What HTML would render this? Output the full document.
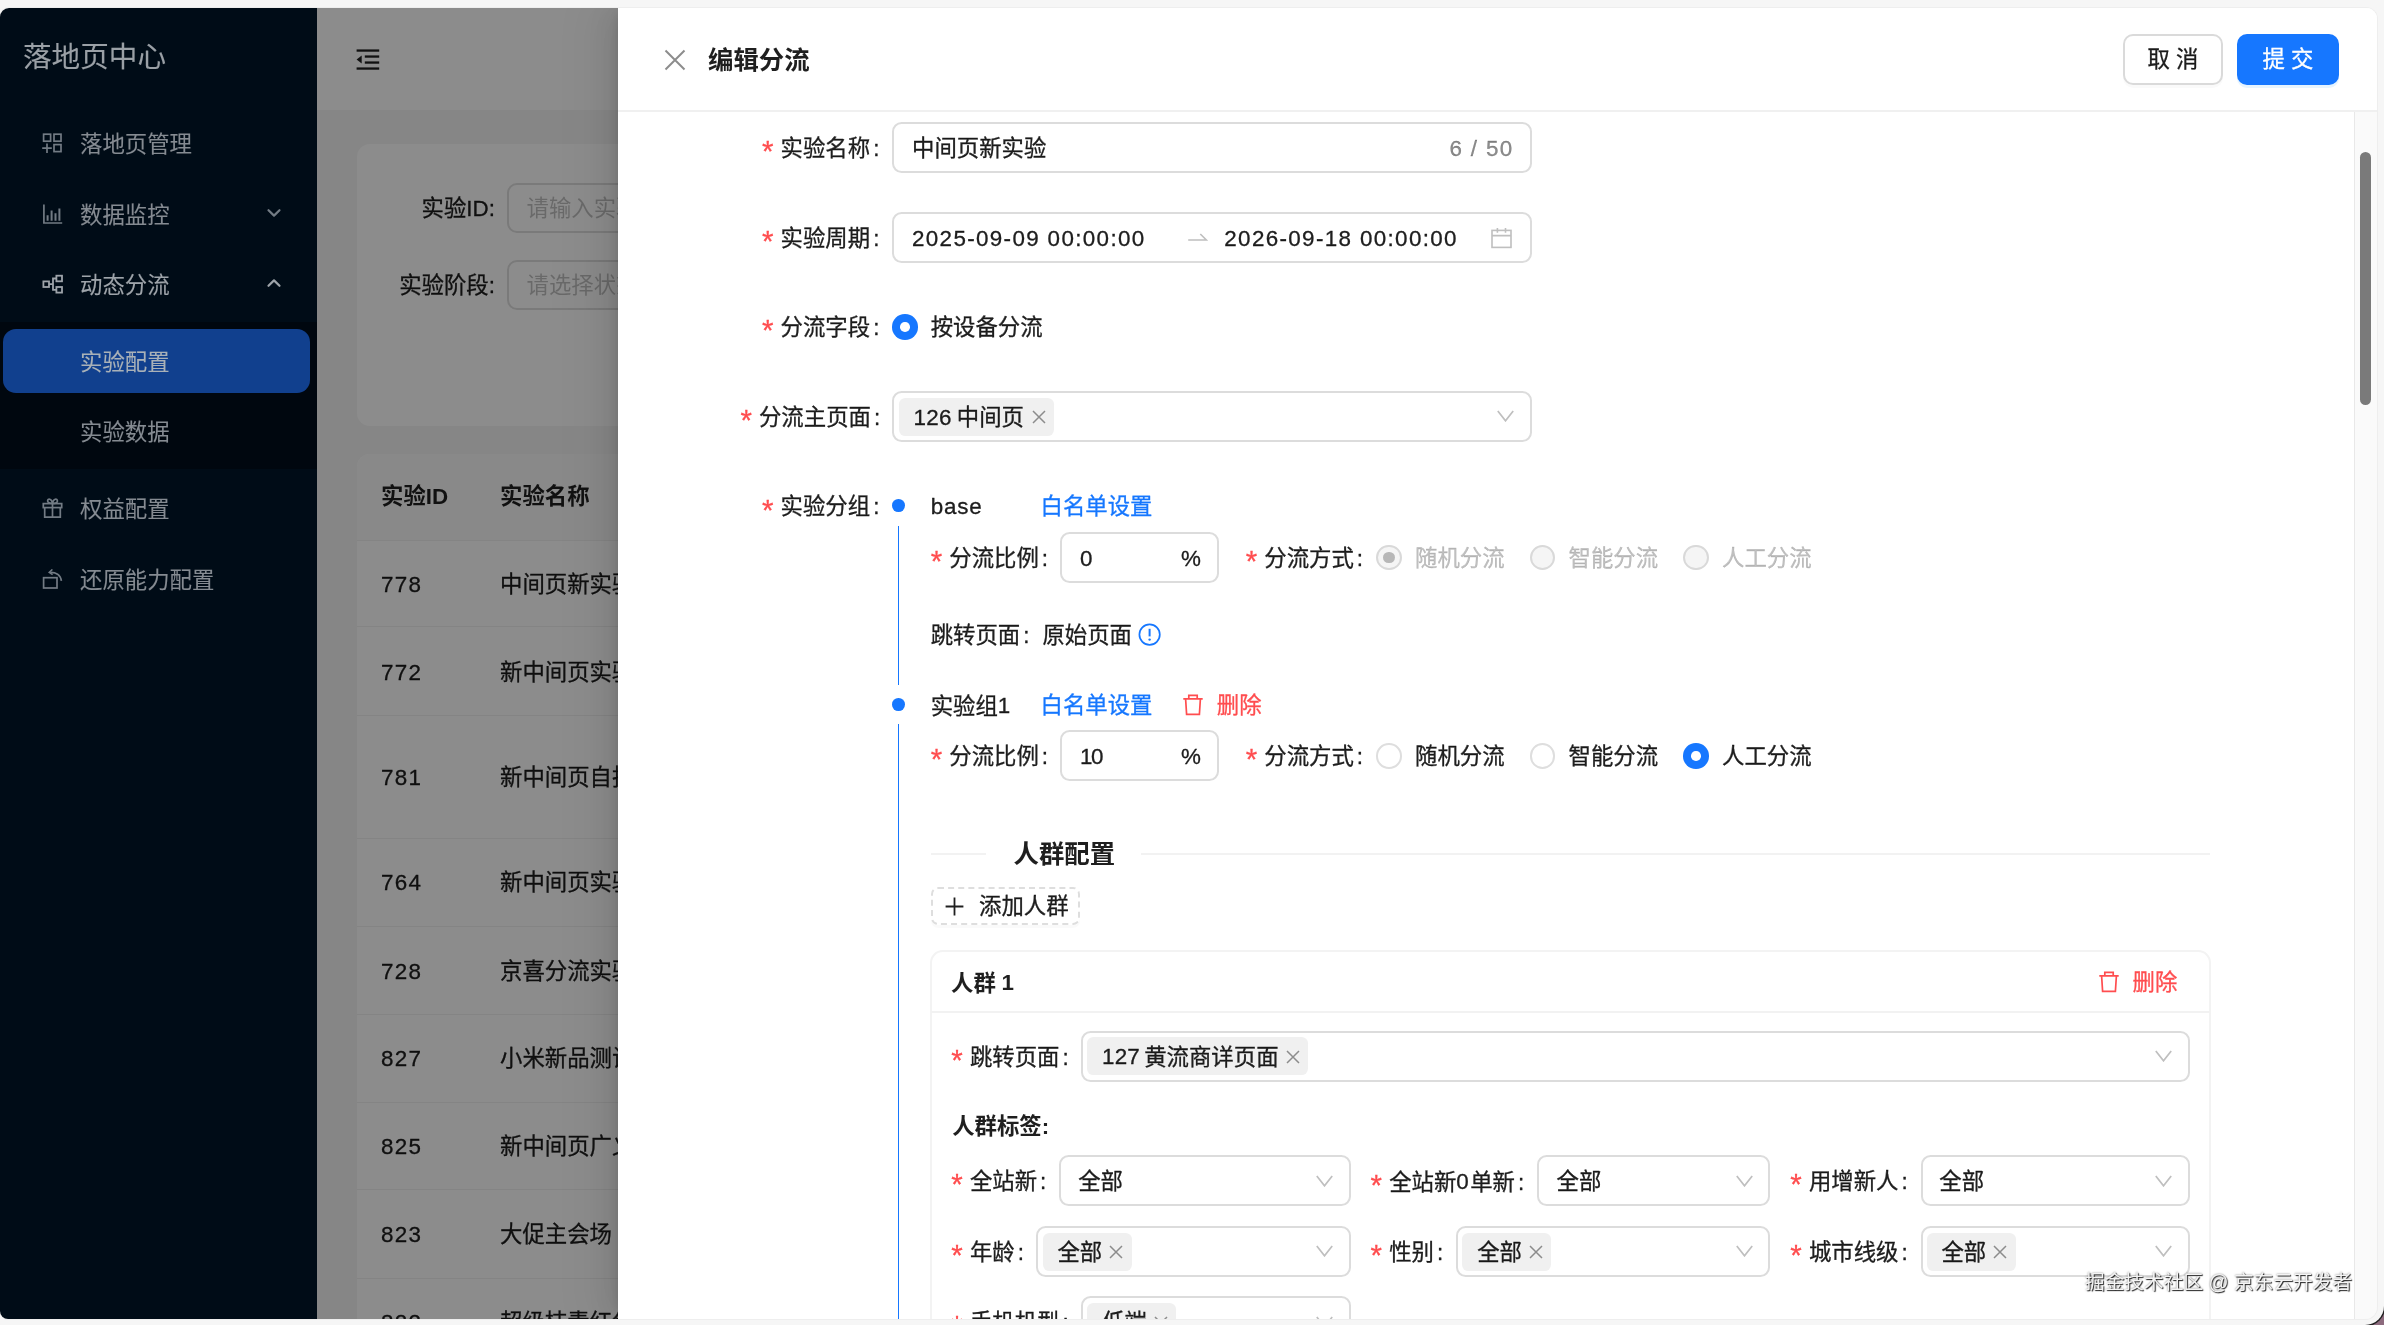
<!DOCTYPE html>
<html lang="zh-CN">
<head>
<meta charset="utf-8">
<title>落地页中心 - 编辑分流</title>
<style>
*{box-sizing:border-box;margin:0;padding:0}
html,body{width:2384px;height:1325px;overflow:hidden;background:#8d6b7e}
.bgp{position:absolute;left:0;top:0;width:2384px;height:1325px;background:#f6f6f6;border-bottom-right-radius:19px;box-shadow:0 0 0 1.500px #222}
body{font-family:"Liberation Sans","Noto Sans CJK SC",sans-serif;font-size:22.4px;color:rgba(0,0,0,.88);position:relative;-webkit-text-stroke:.3px}
.abs{position:absolute}
.win{will-change:transform;position:absolute;left:0;top:8px;width:2377px;height:1311px;border-radius:9px 11px 12px 8px;box-shadow:0 0 0 1px #eee;overflow:hidden;background:#f5f5f5}
/* ---------- sidebar ---------- */
.side{-webkit-text-stroke:.1px;position:absolute;left:0;top:0;width:317px;height:1311px;background:#000c17;color:#858b92}
.logo{position:absolute;left:23px;top:29px;font-size:28.6px;line-height:40px;color:#9aa0a6;white-space:nowrap}
.mi{position:absolute;left:6px;width:304px;height:64px;border-radius:13px;line-height:68px;white-space:nowrap}
.mi .t{position:absolute;left:74px;top:0}
.mi svg{position:absolute}
.mi.sel{background:#11408e;color:#a9b1b8}
.mi.open{color:#9ea4aa}
.mi svg{color:#727b84}
.mi.open svg{color:#9ea4aa}
.sub{position:absolute;left:0;top:314px;width:317px;height:147px;background:#00070f}
/* ---------- main ---------- */
.main{position:absolute;left:317px;top:0;width:2060px;height:1311px;background:#f5f5f5}
.hdr{position:absolute;left:0;top:0;width:2060px;height:102px;background:#fff}
.card{position:absolute;background:#fff;border-radius:13px}
.flab{position:absolute;left:0;width:138px;text-align:right;height:50px;line-height:51px;white-space:nowrap}
.finp{-webkit-text-stroke:0;position:absolute;left:150px;width:400px;height:50px;line-height:48px;border:2px solid #dedede;border-radius:10px;padding-left:17.500px;color:rgba(0,0,0,.25);white-space:nowrap;background:#fff}
.th{position:absolute;left:0;top:0;width:1980px;height:86.7px;line-height:86px;background:#fafafa;font-weight:700;-webkit-text-stroke:0;border-bottom:1.5px solid #f0f0f0}
.tr{position:absolute;left:0;width:1980px;border-bottom:1.5px solid #f0f0f0;white-space:nowrap}
.c1{position:absolute;left:24px}.tr .c1{letter-spacing:1.35px}.c2{position:absolute;left:143px}
.mask{position:absolute;left:317px;top:0;width:2060px;height:1311px;background:rgba(0,0,0,.45)}
/* ---------- drawer ---------- */
.drawer{position:absolute;left:618px;top:0;width:1759px;height:1311px;background:#fff;box-shadow:-10px 0 26px 0 rgba(0,0,0,.08),-5px 0 10px -5px rgba(0,0,0,.12),-19px 0 45px 13px rgba(0,0,0,.05)}
.dhead{position:absolute;left:0;top:0;width:1759px;height:104px;border-bottom:2px solid #f0f0f0}
.dtitle{-webkit-text-stroke:0;position:absolute;left:90px;top:32px;font-size:25.4px;line-height:40px;font-weight:700;white-space:nowrap}
.btn{position:absolute;top:26px;height:51px;border-radius:10px;line-height:49px;text-align:center;font-size:22.4px;white-space:nowrap}
.btn.def{left:1505px;width:100px;line-height:47px;border:2px solid #dadada;background:#fff;box-shadow:0 3px 0 rgba(0,0,0,.02)}
.btn.pri{left:1619px;width:102px;background:#1677ff;color:#fff;line-height:51px;box-shadow:0 3px 0 rgba(5,145,255,.1)}
.dbody{position:absolute;left:0;top:104px;width:1759px;height:1207px;overflow:hidden}
/*GEN*/
.pg{position:absolute;left:-618px;top:-112px;width:2384px;height:1325px}
.pg div,.pg span,.pg svg{position:absolute;white-space:nowrap}
.lb{height:51.2px;line-height:53px}
.lb i{position:static;font-style:normal;color:#ff4d4f;font-family:"Liberation Sans",sans-serif;font-size:29.500px;line-height:20px;display:inline-block;width:18.6px;vertical-align:-5.200px}
.lb b{position:static;font-weight:400;display:inline-block;margin-left:3px}
.ip{height:51.2px;border:2px solid #dcdcdc;border-radius:9.600px;background:#fff;line-height:47px}
.n{position:static!important;font-size:22.4px;letter-spacing:1.35px;vertical-align:.5px}
.n1{position:static!important;font-size:22.4px;letter-spacing:.2px;vertical-align:.5px}
.tag{height:38.4px;line-height:40px;background:#f0f0f0;border-radius:6.4px}
.rd{width:25.6px;height:25.6px;border-radius:50%;border:2px solid #dedede;background:#fff}
.rd.on{border:none;background:#1677ff}
.rd.on:after{content:"";position:absolute;left:8px;top:8px;width:9.6px;height:9.6px;border-radius:50%;background:#fff}
.rd.dis{background:#f5f5f5;border-color:#d9d9d9}
.rd.dis.chk:after{content:"";position:absolute;left:5px;top:5px;width:11.6px;height:11.6px;border-radius:50%;background:rgba(0,0,0,.25)}
.tx{height:51.2px;line-height:53px}
.s{position:static!important}
.blue{color:#1677ff}.red{color:#ff4d4f}.dim{color:rgba(0,0,0,.25)}
.dot{width:12.8px;height:12.8px;border-radius:50%;background:#1677ff}
.vl{width:1.8px;background:#1677ff}
.hl{height:2px;background:#f2f2f2}

.sbar{position:absolute;left:1736.300px;top:104px;width:22.700px;height:1207px;background:#fafafa;border-left:1.500px solid #e8e8e8}
.thumb{position:absolute;left:4.500px;top:40px;width:11px;height:253px;border-radius:5.500px;background:#7a7a7a}
.wm{position:absolute;left:1467px;top:1259px;font-size:19.700px;line-height:30px;color:#f4f4f4;-webkit-text-stroke:0;white-space:nowrap;text-shadow:1px 1px 1px rgba(0,0,0,.85),0 0 2px rgba(0,0,0,.5)}
/*ENDGEN*/
</style>
</head>
<body>
<div class="bgp"></div>
<div class="win">
  <div class="side">
    <div class="logo">落地页中心</div>
    <div class="sub"></div>
    <div class="mi" style="top:103px">
      <svg style="left:36px;top:22px" width="21" height="21" viewBox="0 0 21 21" fill="none" stroke="currentColor" stroke-width="1.7"><rect x="1.6" y="1.2" width="7" height="7"/><rect x="12" y="1.2" width="7" height="7"/><rect x="12" y="11.6" width="7" height="7"/><path d="M0.2 15.2h9.6M5 10.4v9.6"/></svg>
      <span class="t">落地页管理</span>
    </div>
    <div class="mi" style="top:174px">
      <svg style="left:36px;top:22px" width="21" height="21" viewBox="0 0 21 21" fill="none" stroke="currentColor" stroke-width="1.7"><path d="M1.9 0.6V19h18.3"/><path d="M5.6 11.2v5.6M9.6 6.6v10.2M13.5 9.2v7.6M17.4 4.4v12.4" stroke-width="2"/></svg>
      <span class="t">数据监控</span>
      <svg style="left:260px;top:24.5px" width="16" height="12" viewBox="0 0 16 12" fill="none" stroke="currentColor" stroke-width="2.2" stroke-linecap="round" stroke-linejoin="round"><path d="M2.5 3.2L8 8.6l5.5-5.4"/></svg>
    </div>
    <div class="mi open" style="top:244px">
      <svg style="left:36px;top:22px" width="21" height="21" viewBox="0 0 21 21" fill="none" stroke="currentColor" stroke-width="1.8"><rect x="1.4" y="7.4" width="5.6" height="5.6"/><rect x="14.4" y="1.7" width="5.6" height="5.6"/><rect x="14.4" y="13" width="5.6" height="5.6"/><path d="M7 10.2h4M14.4 4.5H11v11.3h3.4"/></svg>
      <span class="t">动态分流</span>
      <svg style="left:260px;top:24.5px" width="16" height="12" viewBox="0 0 16 12" fill="none" stroke="currentColor" stroke-width="2.2" stroke-linecap="round" stroke-linejoin="round"><path d="M2.5 8.8L8 3.4l5.5 5.4"/></svg>
    </div>
    <div class="mi sel" style="top:321px;left:3px;width:307px"><span class="t" style="left:77px">实验配置</span></div>
    <div class="mi" style="top:391px"><span class="t">实验数据</span></div>
    <div class="mi" style="top:468px">
      <svg style="left:36px;top:22px" width="21" height="21" viewBox="0 0 21 21" fill="none" stroke="currentColor" stroke-width="1.7"><rect x="1.3" y="5.6" width="18.4" height="4"/><path d="M2.7 9.6v9.6h15.6V9.6M10.5 5.6v13.6"/><path d="M10.5 5.4C8 5.4 5.6 4.6 5.6 2.9 5.6 0.4 9.6 0.2 10.5 5.4zM10.5 5.4c2.500 0 4.900-.8 4.900-2.500 0-2.500-4-2.700-4.900 2.500z"/></svg>
      <span class="t">权益配置</span>
    </div>
    <div class="mi" style="top:539px">
      <svg style="left:36px;top:22px" width="21" height="21" viewBox="0 0 21 21" fill="none" stroke="currentColor" stroke-width="1.7"><rect x="1.6" y="8.700" width="13.400" height="10.300"/><path d="M8.200 3.300c5.500-.2 10.300 2.500 11.200 8.500"/><path d="M10.400 0.400L7.200 3.300l3.400 2.300" stroke-width="1.500"/></svg>
      <span class="t">还原能力配置</span>
    </div>
  </div>
  <div class="main">
    <div class="hdr">
      <svg class="abs" style="left:39px;top:40.600px" width="24" height="22" viewBox="0 0 24 22" fill="rgba(0,0,0,.88)"><rect x="0.6" y="0.4" width="22.600" height="2.300"/><rect x="8.800" y="6.400" width="14.400" height="2.300"/><rect x="8.800" y="12.400" width="14.400" height="2.300"/><rect x="0.600" y="18.400" width="22.600" height="2.300"/><path d="M0.6 10.600L5.700 6.600v8z"/></svg>
    </div>
    <div class="card" style="left:40px;top:136px;width:1980px;height:282px">
      <div class="flab" style="top:39px">实验ID:</div><div class="finp" style="top:39px">请输入实验ID</div>
      <div class="flab" style="top:116px">实验阶段:</div><div class="finp" style="top:116px">请选择状态</div>
    </div>
    <div class="card" style="left:40px;top:446px;width:1980px;height:900px;overflow:hidden">
      <div class="th"><span class="c1">实验ID</span><span class="c2">实验名称</span></div>
      <div class="tr" style="top:86.7px;height:86.8px;line-height:87.8px"><span class="c1">778</span><span class="c2">中间页新实验</span></div>
      <div class="tr" style="top:173.5px;height:88.5px;line-height:89.5px"><span class="c1">772</span><span class="c2">新中间页实验二</span></div>
      <div class="tr" style="top:262.0px;height:123.3px;line-height:124.3px"><span class="c1">781</span><span class="c2">新中间页自投放</span></div>
      <div class="tr" style="top:385.3px;height:87.7px;line-height:88.7px"><span class="c1">764</span><span class="c2">新中间页实验一</span></div>
      <div class="tr" style="top:473.0px;height:88.0px;line-height:89.0px"><span class="c1">728</span><span class="c2">京喜分流实验</span></div>
      <div class="tr" style="top:561.0px;height:87.5px;line-height:88.5px"><span class="c1">827</span><span class="c2">小米新品测试</span></div>
      <div class="tr" style="top:648.5px;height:87.9px;line-height:88.9px"><span class="c1">825</span><span class="c2">新中间页广义</span></div>
      <div class="tr" style="top:736.4px;height:88.3px;line-height:89.3px"><span class="c1">823</span><span class="c2">大促主会场</span></div>
      <div class="tr" style="top:824.7px;height:87.3px;line-height:88.3px"><span class="c1">822</span><span class="c2">超级桔青红包</span></div>
    </div>
  </div>
  <div class="mask"></div>
  <div class="drawer">
    <div class="dhead">
      <svg class="abs" style="left:46px;top:41px" width="22" height="22" viewBox="0 0 22 22" fill="none" stroke="rgba(0,0,0,.45)" stroke-width="2"><path d="M1.500 1.500l19 19M20.500 1.500l-19 19"/></svg>
      <div class="dtitle">编辑分流</div>
      <div class="btn def">取 消</div>
      <div class="btn pri">提 交</div>
    </div>
    <div class="dbody" id="dbody">
<div class="pg">
<div class="lb" style="left:762.0px;top:122.0px"><i>*</i>实验名称<b>:</b></div>
<div class="ip" style="left:892.4px;top:122.0px;width:639.6px"></div>
<div class="tx " style="left:912.0px;top:122.0px;">中间页新实验</div>
<div class="tx" style="right:870.5px;top:122.0px;color:rgba(0,0,0,.45)"><span class="n">6 / 50</span></div>
<div class="lb" style="left:762.0px;top:211.6px"><i>*</i>实验周期<b>:</b></div>
<div class="ip" style="left:892.4px;top:211.6px;width:639.6px"></div>
<div class="tx " style="left:912.0px;top:211.6px;"><span class="n">2025-09-09 00:00:00</span></div>
<div class="tx " style="left:1224.3px;top:211.6px;"><span class="n">2026-09-18 00:00:00</span></div>
<svg style="left:1187px;top:232px" width="21" height="10" viewBox="0 0 21 10" fill="none" stroke="#bfbfbf" stroke-width="1.700"><path d="M1.200 8h18.200L13.300 2"/></svg>
<svg style="left:1490px;top:227px" width="23" height="22" viewBox="0 0 23 22" fill="none" stroke="#bfbfbf" stroke-width="1.600"><rect x="2" y="3.400" width="19" height="17"/><path d="M2 8.600h19M7.400 1v4.800M15.500 1v4.800"/></svg>
<div class="lb" style="left:762.0px;top:301.2px"><i>*</i>分流字段<b>:</b></div>
<div class="rd on" style="left:892.0px;top:314.2px"></div>
<div class="tx " style="left:930.7px;top:301.2px;">按设备分流</div>
<div class="lb" style="left:740.4px;top:390.8px"><i>*</i>分流主页面<b>:</b></div>
<div class="ip" style="left:892.4px;top:390.8px;width:639.6px"></div>
<div class="tag" style="left:898.6px;top:397.9px;width:155.8px"><span style="left:15.0px;top:0"><span class="n1">126</span><span class="s" style="margin-left:-1px"> 中间页</span></span></div>
<svg style="left:1031.9px;top:410.4px" width="14" height="14" viewBox="0 0 14 14" fill="none" stroke="#8c8c8c" stroke-width="1.500"><path d="M1 1l12 12M13 1L1 13"/></svg>
<svg style="left:1496.5px;top:410.3px" width="17" height="12" viewBox="0 0 17 12" fill="none" stroke="#bfbfbf" stroke-width="1.7"><path d="M0.800 1L8.500 10.800 16.200 1"/></svg>
<div class="lb" style="left:762.0px;top:480.4px"><i>*</i>实验分组<b>:</b></div>
<div class="dot" style="left:892px;top:499.400px"></div>
<div class="vl" style="left:897.5px;top:526.200px;height:158.600px"></div>
<div class="tx " style="left:930.7px;top:480.4px;"><span class="n1" style="letter-spacing:.8px">base</span></div>
<div class="tx blue" style="left:1040.5px;top:480.4px;">白名单设置</div>
<div class="lb" style="left:930.7px;top:531.6px"><i>*</i>分流比例<b>:</b></div>
<div class="ip" style="left:1060.4px;top:531.6px;width:159.1px"></div>
<div class="tx " style="left:1080.0px;top:531.6px;"><span class="n1">0</span></div>
<div class="tx " style="left:1181.0px;top:531.6px;"><span class="n">%</span></div>
<div class="lb" style="left:1245.7px;top:531.6px"><i>*</i>分流方式<b>:</b></div>
<div class="rd dis chk" style="left:1376.2px;top:544.7px"></div>
<div class="rd dis" style="left:1529.8px;top:544.7px"></div>
<div class="rd dis" style="left:1683.2px;top:544.7px"></div>
<div class="tx dim" style="left:1415.0px;top:531.6px;">随机分流</div>
<div class="tx dim" style="left:1568.5px;top:531.6px;">智能分流</div>
<div class="tx dim" style="left:1722.0px;top:531.6px;">人工分流</div>
<div class="tx " style="left:930.7px;top:609.0px;">跳转页面<b style="font-weight:400;margin-left:3px">:</b></div>
<div class="tx " style="left:1042.4px;top:609.0px;">原始页面</div>
<svg style="left:1138px;top:623px" width="24" height="24" viewBox="0 0 24 24" fill="none" stroke="#1677ff" stroke-width="1.700"><circle cx="11.600" cy="11.600" r="10.200"/><path d="M11.600 5.800v7.600" stroke-width="2"/><circle cx="11.600" cy="16.600" r="1.200" fill="#1677ff" stroke="none"/></svg>
<div class="dot" style="left:892px;top:697.800px"></div>
<div class="vl" style="left:897.5px;top:724.300px;height:620px"></div>
<div class="tx " style="left:930.7px;top:678.6px;">实验组<span class="n1">1</span></div>
<div class="tx blue" style="left:1040.5px;top:678.6px;">白名单设置</div>
<svg style="left:1183.0px;top:693.5px" width="20" height="22" viewBox="0 0 20 22" fill="none" stroke="#ff4d4f" stroke-width="1.700"><path d="M0.300 4.800h19.400M5.800 4.600V1.400h8.400v3.200M2.600 4.800l1 15.600h12.800l1-15.600"/></svg>
<div class="tx red" style="left:1216.8px;top:678.6px;">删除</div>
<div class="lb" style="left:930.7px;top:730.2px"><i>*</i>分流比例<b>:</b></div>
<div class="ip" style="left:1060.4px;top:730.2px;width:159.1px"></div>
<div class="tx " style="left:1080.0px;top:730.2px;"><span class="n1" style="letter-spacing:-1.5px">10</span></div>
<div class="tx " style="left:1181.0px;top:730.2px;"><span class="n">%</span></div>
<div class="lb" style="left:1245.7px;top:730.2px"><i>*</i>分流方式<b>:</b></div>
<div class="rd " style="left:1376.2px;top:743.3px"></div>
<div class="rd " style="left:1529.8px;top:743.3px"></div>
<div class="rd on" style="left:1683.2px;top:743.3px"></div>
<div class="tx " style="left:1415.0px;top:730.2px;">随机分流</div>
<div class="tx " style="left:1568.5px;top:730.2px;">智能分流</div>
<div class="tx " style="left:1722.0px;top:730.2px;">人工分流</div>
<div class="hl" style="left:930.800px;top:852.600px;width:55px"></div>
<div class="hl" style="left:1141px;top:852.600px;width:1069px"></div>
<div class="tx " style="left:1013.5px;top:828.0px;font-size:25.4px;font-weight:700;-webkit-text-stroke:0">人群配置</div>
<div style="left:930.800px;top:887px;width:149.700px;height:38px;border:2px dashed #dedede;border-radius:7px;box-shadow:0 3px 0 rgba(0,0,0,.02)"></div>
<svg style="left:945px;top:896.500px" width="19" height="19" viewBox="0 0 19 19" fill="none" stroke="rgba(0,0,0,.88)" stroke-width="1.800"><path d="M0.600 9.500h17.800M9.500 0.600v17.800"/></svg>
<div class="tx " style="left:979.0px;top:880.4px;">添加人群</div>
<div style="left:930.300px;top:950.300px;width:1280.500px;height:420px;border:2px solid #f3f3f3;border-radius:12.800px"></div>
<div class="hl" style="left:931px;top:1011.300px;width:1279px"></div>
<div class="tx " style="left:951.0px;top:956.4px;font-weight:700;-webkit-text-stroke:0">人群<span class="s" style="margin-left:-.5px"> </span><span class="n1">1</span></div>
<svg style="left:2099.0px;top:970.5px" width="20" height="22" viewBox="0 0 20 22" fill="none" stroke="#ff4d4f" stroke-width="1.700"><path d="M0.300 4.800h19.400M5.800 4.600V1.400h8.400v3.200M2.600 4.800l1 15.600h12.800l1-15.600"/></svg>
<div class="tx red" style="left:2132.5px;top:956.4px;">删除</div>
<div class="lb" style="left:951.3px;top:1030.5px"><i>*</i>跳转页面<b>:</b></div>
<div class="ip" style="left:1080.8px;top:1030.5px;width:1109.2px"></div>
<div class="tag" style="left:1087.4px;top:1037.0px;width:221.0px"><span style="left:14.6px;top:0"><span class="n1">127</span><span class="s" style="margin-left:-2px"> 黄流商详页面</span></span></div>
<svg style="left:1285.9px;top:1049.5px" width="14" height="14" viewBox="0 0 14 14" fill="none" stroke="#8c8c8c" stroke-width="1.500"><path d="M1 1l12 12M13 1L1 13"/></svg>
<svg style="left:2155.0px;top:1050.2px" width="17" height="12" viewBox="0 0 17 12" fill="none" stroke="#bfbfbf" stroke-width="1.7"><path d="M0.800 1L8.500 10.800 16.200 1"/></svg>
<div class="tx " style="left:952.2px;top:1100.0px;font-weight:700;-webkit-text-stroke:0">人群标签:</div>
<div class="lb" style="left:951.3px;top:1155.2px"><i>*</i>全站新<b>:</b></div>
<div class="ip" style="left:1058.8px;top:1155.2px;width:292.2px"></div>
<div class="tx " style="left:1078.2px;top:1155.2px;">全部</div>
<svg style="left:1316.0px;top:1174.8px" width="17" height="12" viewBox="0 0 17 12" fill="none" stroke="#bfbfbf" stroke-width="1.7"><path d="M0.800 1L8.500 10.800 16.200 1"/></svg>
<div class="lb" style="left:1370.6px;top:1155.2px"><i>*</i>全站新<span class="n">0</span>单新<b>:</b></div>
<div class="ip" style="left:1537.4px;top:1155.2px;width:232.6px"></div>
<div class="tx " style="left:1556.6px;top:1155.2px;">全部</div>
<svg style="left:1735.5px;top:1174.8px" width="17" height="12" viewBox="0 0 17 12" fill="none" stroke="#bfbfbf" stroke-width="1.7"><path d="M0.800 1L8.500 10.800 16.200 1"/></svg>
<div class="lb" style="left:1790.3px;top:1155.2px"><i>*</i>用增新人<b>:</b></div>
<div class="ip" style="left:1920.6px;top:1155.2px;width:269.4px"></div>
<div class="tx " style="left:1939.3px;top:1155.2px;">全部</div>
<svg style="left:2155.0px;top:1174.8px" width="17" height="12" viewBox="0 0 17 12" fill="none" stroke="#bfbfbf" stroke-width="1.7"><path d="M0.800 1L8.500 10.800 16.200 1"/></svg>
<div class="lb" style="left:951.3px;top:1225.8px"><i>*</i>年龄<b>:</b></div>
<div class="ip" style="left:1036.3px;top:1225.8px;width:314.7px"></div>
<div class="tag" style="left:1042.6px;top:1232.6px;width:89.0px"><span style="left:14.8px;top:0">全部</span></div>
<svg style="left:1109.1px;top:1245.1px" width="14" height="14" viewBox="0 0 14 14" fill="none" stroke="#8c8c8c" stroke-width="1.500"><path d="M1 1l12 12M13 1L1 13"/></svg>
<svg style="left:1316.0px;top:1245.4px" width="17" height="12" viewBox="0 0 17 12" fill="none" stroke="#bfbfbf" stroke-width="1.7"><path d="M0.800 1L8.500 10.800 16.200 1"/></svg>
<div class="lb" style="left:1370.6px;top:1225.8px"><i>*</i>性别<b>:</b></div>
<div class="ip" style="left:1456.2px;top:1225.8px;width:313.8px"></div>
<div class="tag" style="left:1462.4px;top:1232.6px;width:89.0px"><span style="left:14.8px;top:0">全部</span></div>
<svg style="left:1528.9px;top:1245.1px" width="14" height="14" viewBox="0 0 14 14" fill="none" stroke="#8c8c8c" stroke-width="1.500"><path d="M1 1l12 12M13 1L1 13"/></svg>
<svg style="left:1735.5px;top:1245.4px" width="17" height="12" viewBox="0 0 17 12" fill="none" stroke="#bfbfbf" stroke-width="1.7"><path d="M0.800 1L8.500 10.800 16.200 1"/></svg>
<div class="lb" style="left:1790.3px;top:1225.8px"><i>*</i>城市线级<b>:</b></div>
<div class="ip" style="left:1920.6px;top:1225.8px;width:269.4px"></div>
<div class="tag" style="left:1926.6px;top:1232.6px;width:89.0px"><span style="left:14.8px;top:0">全部</span></div>
<svg style="left:1993.1px;top:1245.1px" width="14" height="14" viewBox="0 0 14 14" fill="none" stroke="#8c8c8c" stroke-width="1.500"><path d="M1 1l12 12M13 1L1 13"/></svg>
<svg style="left:2155.0px;top:1245.4px" width="17" height="12" viewBox="0 0 17 12" fill="none" stroke="#bfbfbf" stroke-width="1.7"><path d="M0.800 1L8.500 10.800 16.200 1"/></svg>
<div class="lb" style="left:951.3px;top:1296.4px"><i>*</i>手机机型<b>:</b></div>
<div class="ip" style="left:1081.0px;top:1296.4px;width:270.0px"></div>
<div class="tag" style="left:1087.4px;top:1303.2px;width:89.0px"><span style="left:14.8px;top:0">低端</span></div>
<svg style="left:1153.9px;top:1315.7px" width="14" height="14" viewBox="0 0 14 14" fill="none" stroke="#8c8c8c" stroke-width="1.500"><path d="M1 1l12 12M13 1L1 13"/></svg>
<svg style="left:1316.0px;top:1316.0px" width="17" height="12" viewBox="0 0 17 12" fill="none" stroke="#bfbfbf" stroke-width="1.7"><path d="M0.800 1L8.500 10.800 16.200 1"/></svg>
</div>
</div>
    <div class="sbar"><div class="thumb"></div></div>
    <div class="wm">掘金技术社区 @ 京东云开发者</div>
  </div>
</div>
</body>
</html>
